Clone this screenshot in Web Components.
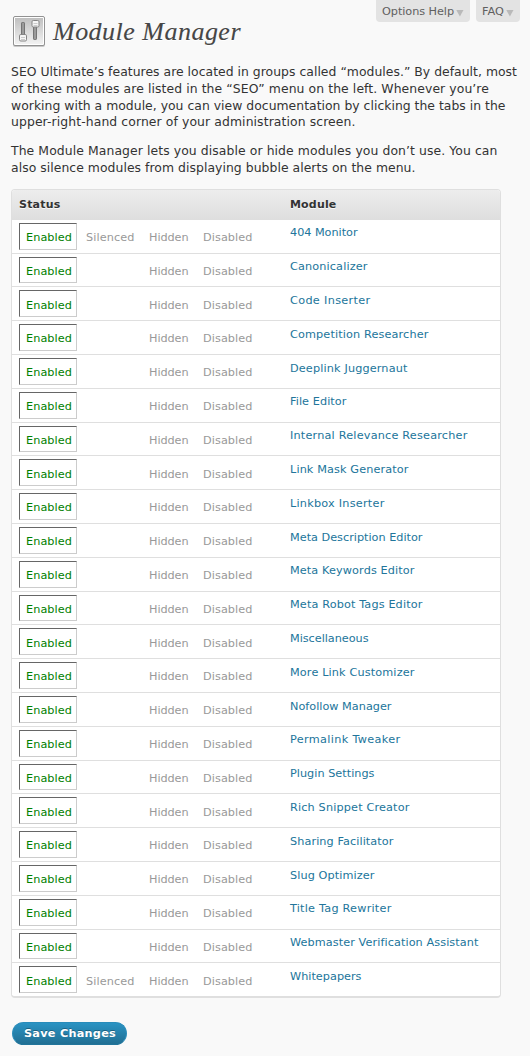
<!DOCTYPE html>
<html lang="en">
<head>
<meta charset="utf-8">
<title>Module Manager</title>
<style>
html,body{margin:0;padding:0;background:#f9f9f9;color:#333;font-family:"DejaVu Sans","Liberation Sans",sans-serif;font-size:11.25px}
</style>
</head>
<body>
<module-manager></module-manager>
<script>
const define = (name, html, setup) => {
  const t = document.createElement('template');
  t.innerHTML = html;
  customElements.define(name, class extends HTMLElement {
    constructor() {
      super();
      this.attachShadow({mode: 'open'}).appendChild(t.content.cloneNode(true));
    }
    connectedCallback() { if (setup) setup(this, this.shadowRoot); }
  });
};

/* One line of text, tracked so that it fills the width given in "w". */
define('fit-text', `<style>
:host{display:block;white-space:nowrap}
span{display:inline-block}
</style><span><slot></slot></span>`, (el, root) => {
  const w = parseFloat(el.getAttribute('w'));
  const span = root.querySelector('span');
  const natural = span.getBoundingClientRect().width;
  if (w && natural) span.style.letterSpacing = ((w - natural) / el.textContent.length).toFixed(4) + 'px';
});

define('help-tab', `<style>
:host{display:flex;box-sizing:border-box;height:22px;padding:0 6px;background:#e3e3e3;border-radius:0 0 4px 4px;color:#606060;line-height:24px}
svg{display:block;margin:10px 0 0 2px}
</style><slot></slot><svg width="8" height="7"><path d="M.3 0h7.2L3.9 6.6z" fill="#b9b9b9"/></svg>`);

define('page-title', `<style>
:host{display:flex;height:34px;align-items:flex-start;color:#464646;font:italic 26px/34px "Liberation Serif",serif;text-shadow:0 1px 0 #fff;-webkit-text-stroke:.1px #464646}
svg{display:block;margin:0 7px 0 1px}
</style>
<svg width="34" height="34" viewBox="0 0 34 34">
<defs>
<linearGradient id="p" x2="0" y2="1"><stop stop-color="#c0c0c0"/><stop offset="1" stop-color="#f2f2f2"/></linearGradient>
<linearGradient id="s" x2="1" y2="0"><stop stop-color="#777"/><stop offset=".5" stop-color="#aaa"/><stop offset="1" stop-color="#808080"/></linearGradient>
</defs>
<rect x="1" y="2.5" width="32" height="29.5" rx="2" fill="#c9c9c9"/>
<rect x="1.5" y="1.5" width="31" height="29" rx="1.5" fill="#fff" stroke="#929292"/>
<rect x="3" y="3" width="28" height="26" fill="url(#p)"/>
<rect x="9.500" y="7.500" width="3" height="15" rx=".7" fill="url(#s)" stroke="#747474"/>
<rect x="21.500" y="10" width="3" height="14.500" rx=".7" fill="url(#s)" stroke="#747474"/>
<rect x="7.500" y="19.500" width="7" height="6.500" rx="1.300" fill="#f5f5f5" stroke="#858585"/>
<path d="M9 22.500h4M9 24.500h4" stroke="#ccc"/>
<rect x="20" y="5.500" width="7" height="6.500" rx="1.300" fill="#f5f5f5" stroke="#858585"/>
<path d="M21.500 8.500h4M21.500 10.500h4" stroke="#ccc"/>
</svg><slot></slot>`);

define('text-block', `<style>
:host{display:block;font:12.4px/16.8px "DejaVu Sans",sans-serif;color:#333}
</style><slot></slot>`);

define('status-picker', `<style>
:host{display:grid;grid-template-columns:58px 63px 54px 60px;align-items:start;height:27px;color:#999}
div{padding:1.3px 0 0 9px;line-height:27px}
.on{box-sizing:border-box;height:26.8px;width:58px;padding:1.3px 0 0 6px;line-height:25px;color:green;border:1px solid #ccc;border-top-color:#666;border-left-color:#666}
</style><div class="on"><fit-text w="46">Enabled</fit-text></div><div class="s"></div><div><fit-text w="39.5">Hidden</fit-text></div><div><fit-text w="49.5">Disabled</fit-text></div>`,
(el, root) => {
  if (el.hasAttribute('silence')) root.querySelector('.s').innerHTML = '<fit-text w="48.5">Silenced</fit-text>';
});

define('module-row', `<style>
:host{display:grid;grid-template-columns:271px 1fr;box-sizing:border-box;height:33.8px;padding:3px 0 0 7px;border-bottom:1px solid #dfdfdf;background:#fff}
:host(:last-of-type){height:32px;border-bottom:0}
.name{padding-top:2.65px;line-height:16px;color:#21759b}
</style><status-picker></status-picker><div class="name"><slot></slot></div>`,
(el, root) => {
  if (el.hasAttribute('silence')) {
    const p = document.createElement('status-picker');
    p.setAttribute('silence', '');
    root.querySelector('status-picker').replaceWith(p);
  }
});

define('module-table', `<style>
:host{display:block;box-sizing:border-box;width:490px;height:809px;border:1px solid #dfdfdf;border-bottom-width:2px;border-radius:4px;background:#fff;overflow:hidden}
header{display:grid;grid-template-columns:271px 1fr;box-sizing:border-box;height:30px;padding-left:7px;line-height:29px;font-size:11px;font-weight:bold;background:linear-gradient(#ededed,#dedede);text-shadow:0 1px 0 rgba(255,255,255,.8)}
</style><header><fit-text w="41.5">Status</fit-text><fit-text w="46.5">Module</fit-text></header><slot></slot>`);

define('save-button', `<style>
:host{display:block}
button{display:block;box-sizing:border-box;width:115px;height:23px;margin:0;padding:1px 0 0 11px;text-align:left;border:1px solid #298cba;border-bottom-color:#21759b;border-radius:11.5px;background:linear-gradient(#2a93c3,#216f93);color:#fff;font:bold 11.25px/20px "DejaVu Sans",sans-serif;text-shadow:0 -1px 0 rgba(0,0,0,.3)}
</style><button><slot></slot></button>`);

const modules = [['404 Monitor',357],['Canonicalizer',367],['Code Inserter',370],['Competition Researcher',428],['Deeplink Juggernaut',407],['File Editor',346],['Internal Relevance Researcher',467],['Link Mask Generator',408],['Linkbox Inserter',384],['Meta Description Editor',422],['Meta Keywords Editor',414],['Meta Robot Tags Editor',422],['Miscellaneous',368],['More Link Customizer',414],['Nofollow Manager',391],['Permalink Tweaker',400],['Plugin Settings',374],['Rich Snippet Creator',409],['Sharing Facilitator',393],['Slug Optimizer',374],['Title Tag Rewriter',391],['Webmaster Verification Assistant',478],['Whitepapers',361]];
const rows = modules.map(([n, end], i) =>
  `<module-row${i === 0 || i === modules.length - 1 ? ' silence' : ''}><fit-text w="${end - 289.5}">${n}</fit-text></module-row>`).join('');

define('module-manager', `<style>
:host{display:block;box-sizing:border-box;width:530px;height:1056px;padding-left:11px;overflow:hidden;background:#f9f9f9}
nav{display:flex;justify-content:flex-end;gap:6px;height:15px;padding-right:10px}
text-block{margin-top:15px}
text-block + text-block{margin-top:12px}
module-table{margin-top:12px}
save-button{margin:24px 0 0 1px}
</style>
<nav><help-tab><fit-text w="72">Options Help</fit-text></help-tab><help-tab><fit-text w="22">FAQ</fit-text></help-tab></nav>
<page-title><fit-text w="188">Module Manager</fit-text></page-title>
<text-block><fit-text w="506">SEO Ultimate’s features are located in groups called “modules.” By default, most</fit-text><fit-text w="478">of these modules are listed in the “SEO” menu on the left. Whenever you’re</fit-text><fit-text w="494.5">working with a module, you can view documentation by clicking the tabs in the</fit-text><fit-text w="344.5">upper-right-hand corner of your administration screen.</fit-text></text-block>
<text-block><fit-text w="486.5">The Module Manager lets you disable or hide modules you don’t use. You can</fit-text><fit-text w="404.5">also silence modules from displaying bubble alerts on the menu.</fit-text></text-block>
<module-table>${rows}</module-table>
<save-button><fit-text w="92">Save Changes</fit-text></save-button>`);
</script>
</body>
</html>
